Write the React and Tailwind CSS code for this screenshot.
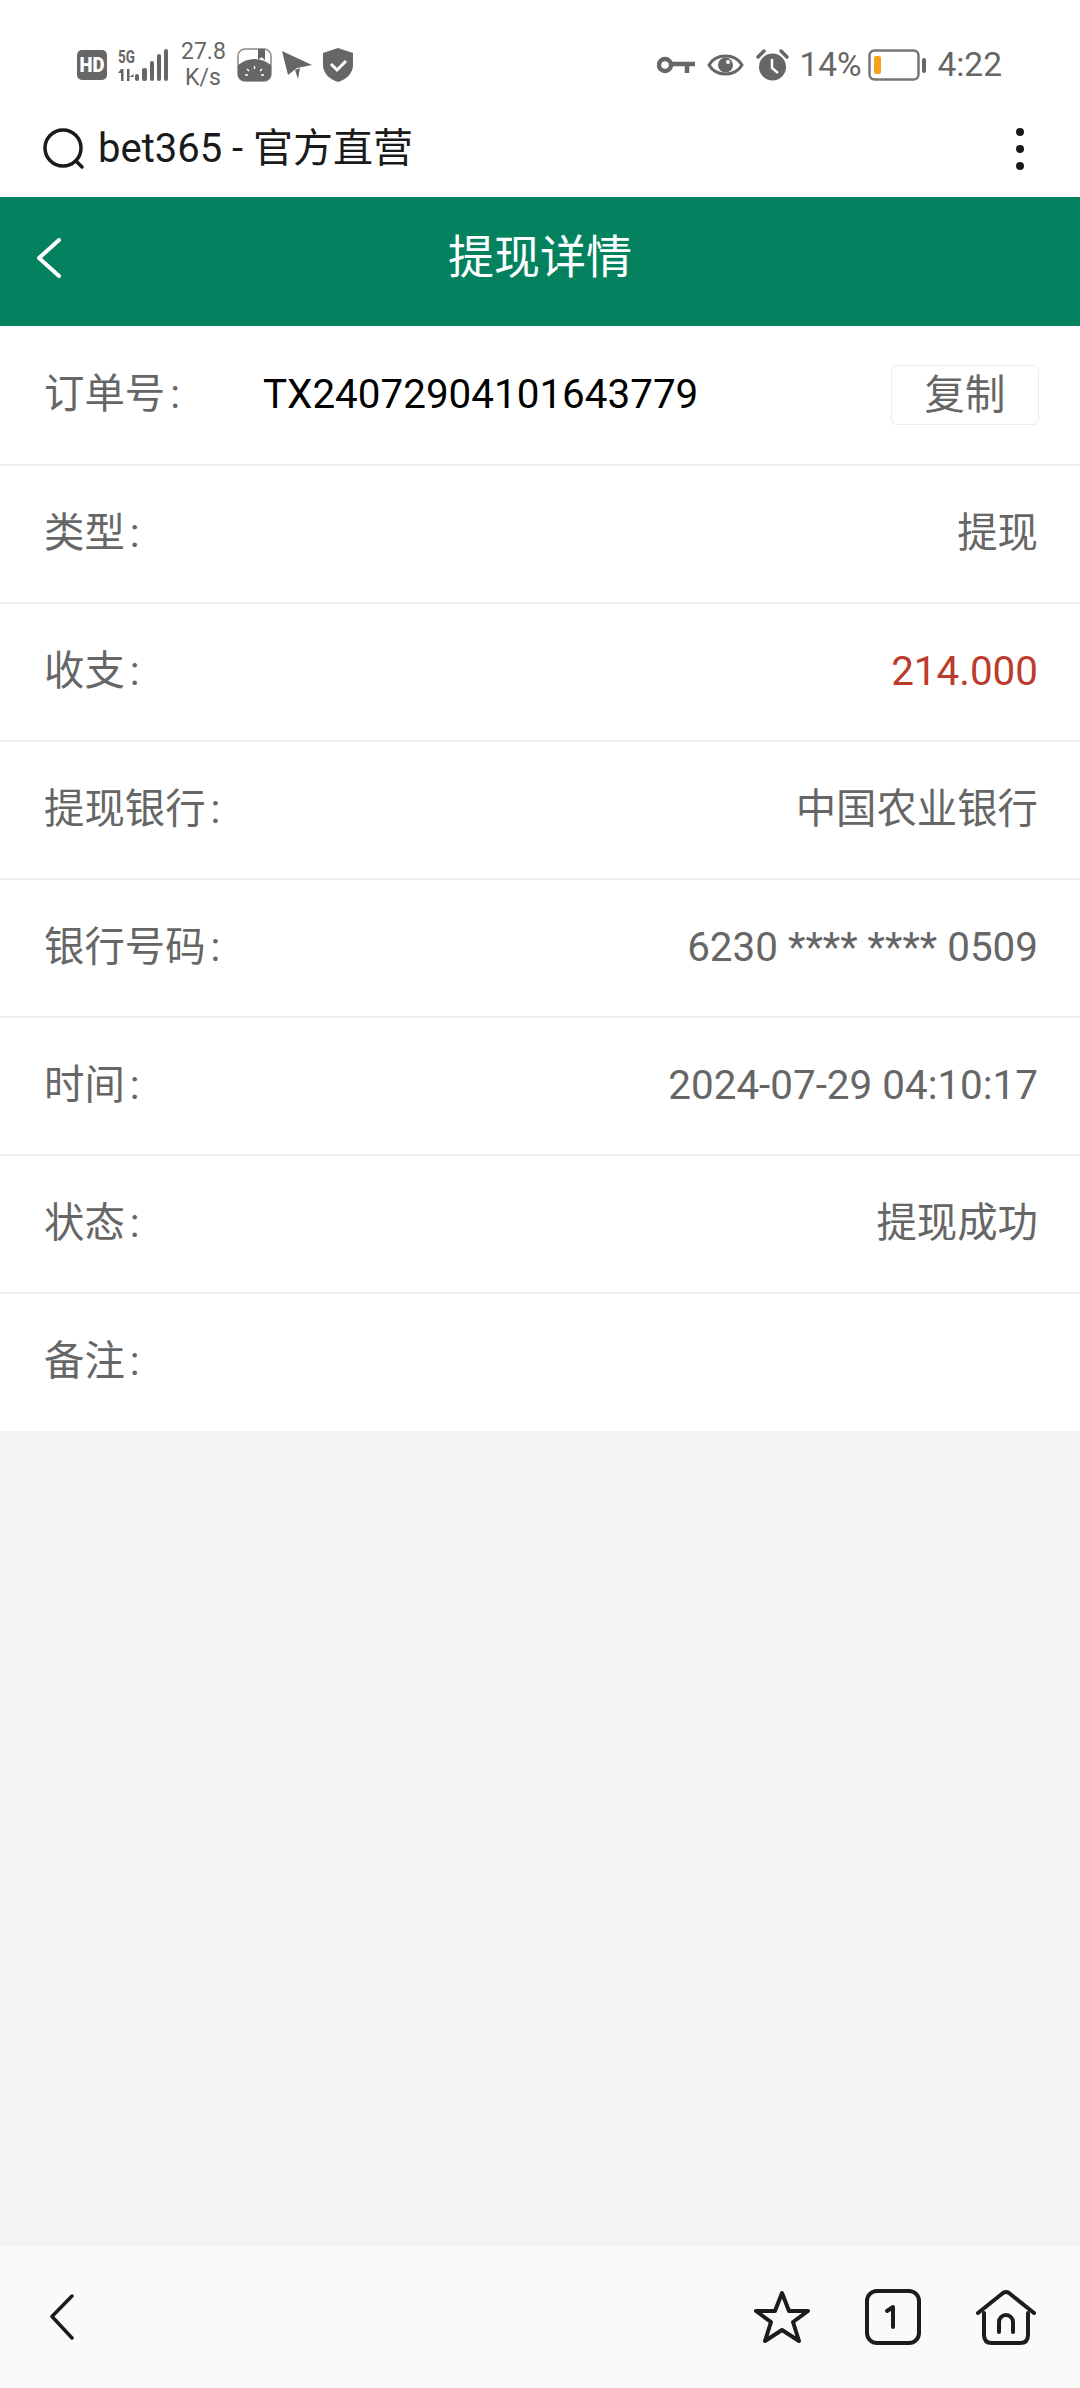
import React from "react";

const rows = [
  { label: "类型", value: "提现" },
  { label: "收支", value: "214.000", color: "text-[#bb3b2c]" },
  { label: "提现银行", value: "中国农业银行" },
  { label: "银行号码", value: "6230 **** **** 0509" },
  { label: "时间", value: "2024-07-29 04:10:17" },
  { label: "状态", value: "提现成功" },
  { label: "备注", value: "" },
];

const Label = ({ text }) => (
  <span className="text-[#666] whitespace-nowrap">
    {text}
    <span className="ml-[5px]">:</span>
  </span>
);

const StatusLeft = () => (
  <div className="flex items-center">
    <svg width="30" height="30" viewBox="0 0 30 30">
      <rect width="30" height="30" rx="5" fill="#666" />
      <text x="15" y="22" textAnchor="middle" fontSize="20" fontWeight="900" fontFamily="Roboto" textLength="25" lengthAdjust="spacingAndGlyphs" fill="#fff">HD</text>
    </svg>
    <svg className="ml-[11px] -mt-[4px]" width="50" height="36" viewBox="0 -4 50 36" fill="#666">
      <text x="0" y="14" fontSize="18" fontWeight="700" fontFamily="Roboto" textLength="17" lengthAdjust="spacingAndGlyphs">5G</text>
      <path d="M3 20h2.500v12H3zM0 24l3-4v4zM9 20h2.500v12H9zM11.500 28l4-3v3z" />
      <rect x="17" y="25" width="4" height="7" rx="2" />
      <rect x="24" y="19" width="5" height="13" rx="2" />
      <rect x="32" y="12" width="4" height="20" rx="2" />
      <rect x="39" y="5" width="4" height="27" rx="2" />
      <rect x="46" y="0" width="4" height="32" rx="2" />
    </svg>
    <div className="ml-[13px] w-[44px] text-center text-[#666] text-[23px] leading-[26px] whitespace-nowrap">
      <div>27.8</div>
      <div>K/s</div>
    </div>
    <svg className="ml-[12px]" width="35" height="34" viewBox="0 0 35 34">
      <rect x="1" y="1" width="33" height="32" rx="7" fill="#fff" stroke="#888" strokeWidth="1.5" />
      <path d="M1 17c10-8 23-8 33 0v9a7 7 0 0 1-7 7H8a7 7 0 0 1-7-7z" fill="#666" />
      <path d="M21 1h7v11l-3.500-3-3.500 3z" fill="#666" />
      <path d="M17.500 18v3M10 21l2 2M25 21l-2 2M8 27h3M24 27h3" stroke="#fff" strokeWidth="1.500" />
    </svg>
    <svg className="ml-[9px]" width="32" height="30" viewBox="0 0 32 30" fill="#666">
      <path d="M1 1l30 14-15 3-9 7z" />
      <path d="M14 20l3 9 2-11z" />
    </svg>
    <svg className="ml-[10px]" width="30" height="34" viewBox="0 0 30 34">
      <path d="M15 0l15 5v12c0 8-6 14-15 17C6 31 0 25 0 17V5z" fill="#666" />
      <path d="M8 16l6 6 9-9" fill="none" stroke="#fff" strokeWidth="3" />
    </svg>
  </div>
);

const StatusRight = () => (
  <div className="flex items-center">
    <svg width="38" height="20" viewBox="0 0 38 20" fill="none" stroke="#666" strokeWidth="4.500">
      <circle cx="8" cy="10" r="6" />
      <path d="M14 9h24M30 9v9" />
    </svg>
    <svg className="ml-[12px]" width="37" height="28" viewBox="0 0 37 28" fill="none">
      <path d="M2 14C9 2 28 2 35 14 28 26 9 26 2 14z" stroke="#666" strokeWidth="3" />
      <circle cx="18.500" cy="14" r="7.500" fill="#666" />
      <circle cx="21" cy="11" r="2" fill="#fff" />
    </svg>
    <svg className="ml-[12px]" width="33" height="32" viewBox="0 0 33 32">
      <circle cx="16.500" cy="18" r="13.500" fill="#666" />
      <path d="M16 10v9l6 5" fill="none" stroke="#fff" strokeWidth="2.500" />
      <path d="M2 8l6-6M31 8l-6-6" stroke="#666" strokeWidth="3.500" strokeLinecap="round" />
    </svg>
    <span className="ml-[10px] w-[62px] text-[33.500px] text-[#666] whitespace-nowrap">14%</span>
    <svg className="ml-[7px]" width="58" height="32" viewBox="0 0 58 32">
      <rect x="1.500" y="1.500" width="49" height="29" rx="5" fill="none" stroke="#777" strokeWidth="2.500" />
      <rect x="6" y="7" width="7" height="18" rx="2" fill="#f7a11d" />
      <rect x="54" y="9" width="4" height="15" rx="2" fill="#666" />
    </svg>
    <span className="ml-[11px] text-[33.500px] text-[#666]">4:22</span>
  </div>
);

const BottomBar = () => (
  <div className="h-[142px] bg-[#fafafa] flex items-center pl-[50px] pr-[44px]">
    <svg width="24" height="46" viewBox="0 0 24 46" fill="none" stroke="#1c1c1c" strokeWidth="3.500" strokeLinecap="round" strokeLinejoin="round">
      <path d="M22 2L2 22.500 22 44" />
    </svg>
    <svg className="ml-auto" width="56" height="54" viewBox="0 0 56 54" fill="none" stroke="#1c1c1c" strokeWidth="4" strokeLinejoin="round">
      <path d="M28 3l7 18h19L39 32l6 19-17-11-17 11 6-19L2 21h19z" />
    </svg>
    <svg className="ml-[55px]" width="56" height="56" viewBox="0 0 56 56" fill="none" stroke="#1c1c1c" strokeWidth="4">
      <rect x="2" y="2" width="52" height="52" rx="10" />
      <path d="M22 22l6-4v20" strokeLinecap="round" strokeLinejoin="round" />
    </svg>
    <svg className="ml-[55px]" width="60" height="56" viewBox="0 0 60 56" fill="none" stroke="#1c1c1c" strokeWidth="4" strokeLinecap="round" strokeLinejoin="round">
      <path d="M2 24L27 4q3-2 6 0l25 20" />
      <path d="M8 24v22q0 8 8 8h28q8 0 8-8V24" />
      <path d="M23 43V33a7 7 0 0 1 14 0v10" />
    </svg>
  </div>
);

export default function App() {
  return (
    <div className="w-[1080px] h-[2388px] flex flex-col bg-[#f3f3f3] font-['Roboto','Noto_Sans_CJK_SC',sans-serif]">
      <div className="bg-white">
        <div className="h-[100px] pt-[30px] pl-[77px] pr-[78px] flex items-center justify-between">
          <StatusLeft />
          <StatusRight />
        </div>
        <div className="h-[97px] pl-[43px] pr-[44px] flex items-center">
          <svg width="42" height="42" viewBox="0 0 42 42" fill="none" stroke="#1a1a1a" strokeWidth="3.500" strokeLinecap="round">
            <circle cx="20" cy="20" r="18" />
            <path d="M33 33l6 6" />
          </svg>
          <span className="ml-[13px] text-[40px] text-[#1a1a1a]">bet365 - 官方直营</span>
          <div className="ml-auto mr-[12px] flex flex-col gap-[9px]">
            <span className="w-[8px] h-[8px] rounded-full bg-[#1a1a1a]" />
            <span className="w-[8px] h-[8px] rounded-full bg-[#1a1a1a]" />
            <span className="w-[8px] h-[8px] rounded-full bg-[#1a1a1a]" />
          </div>
        </div>
      </div>

      <div className="h-[129px] bg-[#04825f] grid grid-cols-[1fr_auto_1fr] items-center pb-[8px]">
        <svg className="ml-[36px]" width="26" height="40" viewBox="0 0 26 40" fill="none" stroke="#fff" strokeWidth="4" strokeLinecap="round" strokeLinejoin="round">
          <path d="M23 2L3 20l20 18" />
        </svg>
        <span className="text-[46px] text-white">提现详情</span>
        <span />
      </div>

      <div className="bg-white text-[40.400px]">
        <div className="h-[140px] pl-[44px] pr-[42px] flex items-center border-b-2 border-[#f0f0f0]">
          <span className="w-[219px]"><Label text="订单号" /></span>
          <span className="text-black">TX24072904101643779</span>
          <button className="ml-auto -mr-[1px] w-[148px] h-[60px] border border-[#ececec] rounded-[6px] text-[#666]">复制</button>
        </div>
        {rows.map((r, i) => (
          <div
            key={r.label}
            className={i < rows.length - 1 ? "h-[138px] pl-[44px] pr-[42px] flex items-center justify-between border-b-2 border-[#f0f0f0]" : "h-[137px] pl-[44px] pr-[42px] flex items-center justify-between"}
          >
            <Label text={r.label} />
            <span className={r.color || "text-[#666]"}>{r.value}</span>
          </div>
        ))}
      </div>

      <div className="flex-1" />
      <BottomBar />
    </div>
  );
}
